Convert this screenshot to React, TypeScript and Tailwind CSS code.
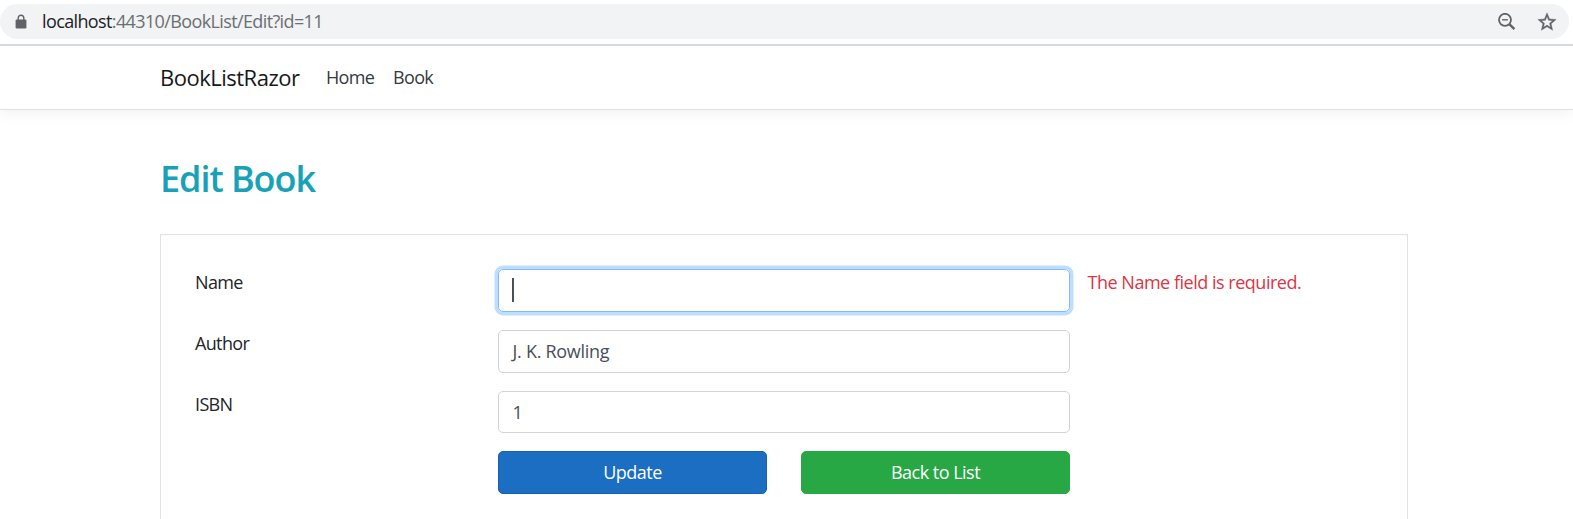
import React from "react";

function LockIcon() {
  return (
    <svg className="block h-[15px] w-[12px]" viewBox="0 0 12 15">
      <path d="M3.2 6V4a2.8 2.8 0 0 1 5.6 0v2" fill="none" stroke="#5f6368" strokeWidth="1.4" />
      <rect x="0.6" y="5.4" width="10.8" height="9" rx="1.2" fill="#5f6368" />
    </svg>
  );
}

function ZoomOutIcon() {
  return (
    <svg className="block h-[18px] w-[18px]" viewBox="0 0 18 18" fill="none" stroke="#5f6368">
      <circle cx="7" cy="6.8" r="6" strokeWidth="1.8" />
      <path d="M4.1 6.8h5.8" strokeWidth="1.4" />
      <path d="M11.1 10.9l5.3 5.3" strokeWidth="2.4" />
    </svg>
  );
}

function StarIcon() {
  return (
    <svg className="block h-[22px] w-[22px]" viewBox="0 0 24 24" fill="#5f6368" stroke="#5f6368" strokeWidth="0.4">
      <path d="M22 9.24l-7.19-.62L12 2 9.19 8.63 2 9.24l5.46 4.73L5.82 21 12 17.27 18.18 21l-1.63-7.03L22 9.24zM12 15.4l-3.76 2.27 1-4.28-3.32-2.88 4.38-.38L12 6.1l1.71 4.04 4.38.38-3.32 2.88 1 4.28L12 15.4z" />
    </svg>
  );
}

function AddressBar() {
  return (
    <div className="h-[46px] border-b-2 border-[#dadae2] pt-1">
      <div className="mr-1 flex h-[35px] items-center rounded-full bg-[#f1f3f4] pr-[11px] pl-[15px]">
        <LockIcon />
        <div className="ml-[15px] flex-1 text-[18px] leading-[33px] tracking-[-0.62px] text-[#6b6f73]">
          <span className="text-[#202124]">localhost</span>:44310/BookList/Edit?id=11
        </div>
        <ZoomOutIcon />
        <div className="ml-5">
          <StarIcon />
        </div>
      </div>
    </div>
  );
}

function NavBar() {
  return (
    <header className="flex h-16 items-center border-b border-[#dee2e6] pl-[160px] shadow-[0_4px_13px_rgba(0,0,0,0.05)]">
      <a className="w-[166px] text-[22px] tracking-[-0.5px] text-[#16181b]">BookListRazor</a>
      <nav className="flex text-[18px] tracking-[-0.65px] text-[#343a40]">
        <a className="w-[67px]">Home</a>
        <a>Book</a>
      </nav>
    </header>
  );
}

type FieldProps = { label: string; value?: string; focused?: boolean; error?: string };

function Field({ label, value = "", focused = false, error }: FieldProps) {
  return (
    <div className="flex h-[43px] last-of-type:h-[42px]">
      <label className="w-[303px] leading-[27px] tracking-[-0.65px]">{label}</label>
      <div
        className={
          focused
            ? "flex w-[572px] items-center rounded-[5px] border border-[#80bdff] px-[13px] shadow-[0_0_0_3.5px_#bfdeff]"
            : "flex w-[572px] items-center rounded-[5px] border border-[#ced4da] px-[13.5px] tracking-[-0.28px] text-[#495057]"
        }
      >
        {focused ? <span className="mb-0.5 h-6 w-0.5 bg-[#495057]" /> : value}
      </div>
      {error && <span className="ml-[17.5px] leading-[27px] tracking-[-0.48px] text-[#dc3545]">{error}</span>}
    </div>
  );
}

export default function App() {
  return (
    <div className="h-[519px] overflow-hidden bg-white font-['Open_Sans',sans-serif] text-[18px] text-[#212529]">
      <AddressBar />
      <NavBar />
      <main className="ml-[160px] w-[1248px] pt-[42px]">
        <h2 className="mb-[28px] text-[36px] leading-[54px] font-semibold tracking-[-1.05px] text-[#17a2b8]">
          Edit Book
        </h2>
        <form className="h-[320px] border border-[#dee2e6] pt-[34px] pl-[34px]">
          <div className="mb-[18px] flex flex-col gap-[18px]">
            <Field label="Name" focused error="The Name field is required." />
            <Field label="Author" value="J. K. Rowling" />
            <Field label="ISBN" value="1" />
          </div>
          <div className="flex gap-[34px] pl-[303px] tracking-[-0.5px] text-white">
            <button type="button" className="h-[43px] w-[269px] rounded-[5px] border border-[#1861ac] bg-[#1b6ec2]">
              Update
            </button>
            <button type="button" className="h-[43px] w-[269px] rounded-[5px] border border-[#28a745] bg-[#28a745]">
              Back to List
            </button>
          </div>
        </form>
      </main>
    </div>
  );
}
